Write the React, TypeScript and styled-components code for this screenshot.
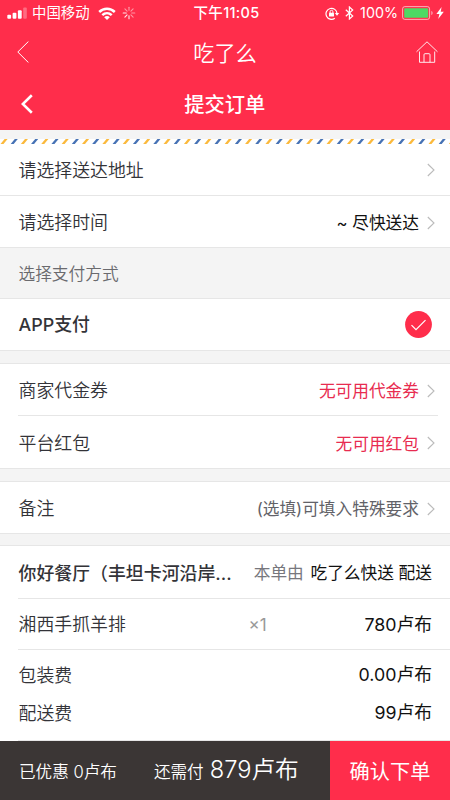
import React from 'react';
import styled, { createGlobalStyle } from 'styled-components';

const RED = '#ff2d4b';

const GlobalStyle = createGlobalStyle`
  * { box-sizing: border-box; }
  body { margin: 0; background: #f4f4f4; }
  svg { display: block; flex: none; }
`;

const Screen = styled.div`
  width: 450px;
  height: 800px;
  overflow: hidden;
  display: flex;
  flex-direction: column;
  background: #f4f4f4;
  color: #333338;
  font-family: Inter, "Noto Sans CJK SC", sans-serif;
  font-size: 17.9px;
  line-height: 26px;
  white-space: nowrap;
`;

const Triple = styled.div<{ $height: number; $left: number; $right: number }>`
  display: grid;
  grid-template-columns: 1fr auto 1fr;
  align-items: center;
  height: ${(p) => p.$height}px;
  padding: 0 ${(p) => p.$right}px 0 ${(p) => p.$left}px;
  background: ${RED};
  color: #fff;
`;

const Side = styled.div<{ $end?: boolean }>`
  display: flex;
  align-items: center;
  justify-content: ${(p) => (p.$end ? 'flex-end' : 'flex-start')};
`;

const Carrier = styled.span`
  margin: 0 8px 0 5px;
  font-size: 14.4px;
`;

const Clock = styled.span`
  margin-left: 2px;
  font-size: 14.5px;
  font-weight: 500;
  letter-spacing: 0.3px;
`;

const Percent = styled.span`
  margin: 0 4px 0 6px;
  font-size: 14.3px;
`;

const Title = styled.span<{ $size: number; $weight: number; $shift?: number }>`
  margin-right: ${(p) => p.$shift ?? 0}px;
  padding-top: 2px;
  font-size: ${(p) => p.$size}px;
  font-weight: ${(p) => p.$weight};
  line-height: 30px;
`;

const Envelope = styled.div`
  height: 15px;
  padding-top: 9px;
  background: linear-gradient(#f4f4f4 9px, #fff 9px);
`;

const Group = styled.section<{ $top?: boolean; $bottom?: boolean }>`
  background: #fff;
  border-top: ${(p) => (p.$top ? '1px solid #e6e6e6' : '0')};
  border-bottom: ${(p) => (p.$bottom ? '1px solid #e6e6e6' : '0')};
`;

const Row = styled.div<{ $height: number; $right?: number; $drop?: number }>`
  display: flex;
  align-items: center;
  justify-content: space-between;
  height: ${(p) => p.$height}px;
  padding: ${(p) => p.$drop ?? 2}px ${(p) => p.$right ?? 15}px 0 18.5px;
`;

const Divider = styled.div<{ $left?: number; $right?: number }>`
  height: 1px;
  margin: 0 ${(p) => p.$right ?? 0}px 0 ${(p) => p.$left ?? 0}px;
  background: #e6e6e6;
`;

const Gap = styled.div<{ $height: number }>`
  height: ${(p) => p.$height}px;
`;

const Caption = styled.div`
  height: 50px;
  padding: 13px 18.5px 0;
  font-size: 16.7px;
  font-weight: 350;
  color: #6a6a6e;
`;

const Label = styled.span<{ $weight?: number }>`
  padding-top: 1px;
  font-weight: ${(p) => p.$weight ?? 350};
`;

const Value = styled.span<{ $color?: string }>`
  display: flex;
  align-items: center;
  gap: 8px;
  font-size: 16.7px;
  color: ${(p) => p.$color ?? '#111'};
`;

const ValueText = styled.span`
  padding-top: 1px;
`;

const Courier = styled.span`
  font-size: 16.7px;
  color: #111;
`;

const Muted = styled.span`
  margin-right: 2px;
  color: #77777d;
`;

const ItemRow = styled.div`
  display: grid;
  grid-template-columns: 230px 1fr auto;
  align-items: center;
  height: 50px;
  padding: 1px 18px 0 18.5px;
`;

const Count = styled.span`
  font-size: 17px;
  color: #999;
`;

const Price = styled.span`
  font-size: 17.8px;
  color: #111;
`;

const Fees = styled.div`
  height: 90px;
  padding-top: 5px;
`;

const Footer = styled.footer`
  display: flex;
  height: 59px;
  background: #3b3635;
  color: #fff;
`;

const Totals = styled.div`
  flex: 1;
  display: flex;
  align-items: baseline;
  padding: 14px 0 0 19px;
  font-size: 16.6px;
  font-weight: 350;
  line-height: 30px;
`;

const Due = styled.span`
  margin-left: 37px;
`;

const Amount = styled.span`
  margin-left: 6px;
  font-size: 23.7px;
`;

const Submit = styled.button`
  width: 120px;
  padding: 2px 0 0;
  border: 0;
  background: ${RED};
  color: #fff;
  font: inherit;
  font-size: 20.2px;
`;

const Chevron = () => (
  <svg width="8" height="14" viewBox="0 0 8 14" fill="none" stroke="#bbb" strokeWidth="1.1">
    <path d="M0.8 1 7 7 0.8 13" />
  </svg>
);

const Signal = () => (
  <svg width="20" height="12" viewBox="0 0 20 12" fill="#fff">
    <rect x="0.3" y="7.7" width="3.8" height="4" rx="1" />
    <rect x="5.6" y="5.7" width="3.8" height="6" rx="1" />
    <rect x="10.9" y="3.2" width="3.8" height="8.5" rx="1" />
    <rect x="16.2" y="0.5" width="3.6" height="11.2" rx="1" opacity="0.3" />
  </svg>
);

const Wifi = () => (
  <svg width="18" height="13" viewBox="0 0 18 13" fill="none" stroke="#fff" strokeWidth="2.5">
    <path d="M1.2 5C5.6.7 12.4.7 16.8 5" />
    <path d="M4.3 8.2C7 5.7 11 5.7 13.7 8.2" />
    <path d="M6.2 10.2C7.8 8.7 10.2 8.7 11.8 10.2L9 13Z" fill="#fff" stroke="none" />
  </svg>
);

const Spinner = () => (
  <svg width="14" height="14" viewBox="0 0 14 14" stroke="#fff" strokeWidth="1.1" strokeLinecap="round">
    {[0, 1, 2, 3, 4, 5, 6, 7].map((i) => (
      <path
        key={i}
        d="M7 4.3V1.2"
        opacity={i >= 4 && i <= 6 ? 0.9 : 0.5}
        transform={`rotate(${i * 45} 7 7)`}
      />
    ))}
  </svg>
);

const RotationLock = () => (
  <svg width="15" height="13" viewBox="0 0 15 13" fill="none" stroke="#fff" strokeWidth="1.2">
    <path d="M9.8 11.2A5.5 5.5 0 1 1 12 6.5" />
    <path d="M9.8 6h4.4L12 8.8Z" fill="#fff" stroke="none" />
    <rect x="4" y="5.7" width="5" height="3.9" rx="0.5" fill="#fff" stroke="none" />
    <path d="M5.1 6V4.7a1.4 1.4 0 0 1 2.8 0V6" strokeWidth="1" />
  </svg>
);

const Bluetooth = () => (
  <svg width="9" height="14" viewBox="0 0 9 14" fill="none" stroke="#fff" strokeWidth="1.2">
    <path d="M.8 3.8 7.7 10 4.4 13V1L7.7 4 .8 10.2" />
  </svg>
);

const Battery = () => (
  <svg width="31" height="14" viewBox="0 0 31 14">
    <rect x="0.6" y="0.6" width="27" height="12.8" rx="2.2" fill="none" stroke="#fff" strokeOpacity="0.6" />
    <rect x="2.2" y="2.2" width="24" height="9.6" rx="0.8" fill="#4cd964" />
    <path d="M29.3 5v4c1.8-.8 1.8-3.2 0-4Z" fill="#fff" opacity="0.6" />
  </svg>
);

const Bolt = () => (
  <svg width="8" height="12" viewBox="0 0 8 12" fill="#fff">
    <path d="M5.6 0 .4 6.9h3L2.2 12 7.8 4.7H4.7Z" />
  </svg>
);

const BackThin = () => (
  <svg width="12" height="22" viewBox="0 0 12 22" fill="none" stroke="#fff" strokeWidth="1">
    <path d="M11.4.5.8 11l10.6 10.5" />
  </svg>
);

const Home = () => (
  <svg width="22" height="22" viewBox="0 0 22 22" fill="none" stroke="#fff" strokeWidth="0.9">
    <path d="M.5 10.8 11 .8l10.5 10M3.5 10.5v10.8h15.2V10.5M8 21.3v-7.6q0-1 1-1h4q1 0 1 1v7.6" />
  </svg>
);

const BackBold = () => (
  <svg width="12" height="20" viewBox="0 0 12 20" fill="none" stroke="#fff" strokeWidth="2.6">
    <path d="M10.8 1.2 1.8 10l9 8.8" />
  </svg>
);

const Check = () => (
  <svg width="27" height="27" viewBox="0 0 27 27" fill="none">
    <circle cx="13.5" cy="13.5" r="13.4" fill={RED} />
    <path d="M6.5 14.2 11 18.7 20.5 9.2" stroke="#fff" strokeWidth="1.2" />
  </svg>
);

const Stripes = () => (
  <svg width="450" height="5" viewBox="0 0 450 5">
    {Array.from({ length: 45 }, (_, i) => (
      <path
        key={i}
        d="M.5 5 4.6 0h3L3.5 5Z"
        fill={i % 2 ? '#4672b5' : '#fbb93c'}
        transform={`translate(${i * 10.19} 0)`}
      />
    ))}
  </svg>
);

const Spacer = styled.div<{ $w: number }>`
  width: ${(p) => p.$w}px;
`;

export default function App() {
  return (
    <Screen>
      <GlobalStyle />
      <Triple $height={25} $left={7} $right={6}>
        <Side>
          <Signal />
          <Carrier>中国移动</Carrier>
          <Wifi />
          <Spacer $w={6} />
          <Spinner />
        </Side>
        <Clock>下午11:05</Clock>
        <Side $end>
          <RotationLock />
          <Spacer $w={5} />
          <Bluetooth />
          <Percent>100%</Percent>
          <Battery />
          <Spacer $w={3} />
          <Bolt />
        </Side>
      </Triple>
      <Triple $height={53} $left={17} $right={12}>
        <Side><BackThin /></Side>
        <Title $size={21.2} $weight={350} $shift={5}>吃了么</Title>
        <Side $end><Home /></Side>
      </Triple>
      <Triple $height={52} $left={20.5} $right={21}>
        <Side><BackBold /></Side>
        <Title $size={20.3} $weight={500}>提交订单</Title>
        <Side $end />
      </Triple>
      <Envelope><Stripes /></Envelope>
      <Group $bottom>
        <Row $height={50} $drop={0}><Label>请选择送达地址</Label><Chevron /></Row>
        <Divider />
        <Row $height={51}><Label>请选择时间</Label><Value><ValueText>~ 尽快送达</ValueText><Chevron /></Value></Row>
      </Group>
      <Caption>选择支付方式</Caption>
      <Group $top $bottom>
        <Row $height={51} $right={18} $drop={0}><Label $weight={450}>APP支付</Label><Check /></Row>
      </Group>
      <Gap $height={12} />
      <Group $top $bottom>
        <Row $height={51}><Label>商家代金券</Label><Value $color="#e82c50"><ValueText>无可用代金券</ValueText><Chevron /></Value></Row>
        <Divider $left={18} $right={12} />
        <Row $height={52}><Label>平台红包</Label><Value $color="#e82c50"><ValueText>无可用红包</ValueText><Chevron /></Value></Row>
      </Group>
      <Gap $height={12} />
      <Group $top $bottom>
        <Row $height={51}><Label>备注</Label><Value $color="#626268"><ValueText>(选填)可填入特殊要求</ValueText><Chevron /></Value></Row>
      </Group>
      <Gap $height={11} />
      <Group $top>
        <Row $height={52} $right={18}>
          <Label $weight={500}>你好餐厅（丰坦卡河沿岸...</Label>
          <Courier><Muted>本单由</Muted> 吃了么快送 配送</Courier>
        </Row>
        <Divider $left={18} />
        <ItemRow><Label>湘西手抓羊排</Label><Count>×1</Count><Price>780卢布</Price></ItemRow>
        <Divider $left={18} />
        <Fees>
          <Row $height={38} $right={18}><Label>包装费</Label><Price>0.00卢布</Price></Row>
          <Row $height={38} $right={18}><Label>配送费</Label><Price>99卢布</Price></Row>
        </Fees>
        <Divider $left={18} />
      </Group>
      <Footer>
        <Totals>
          <span>已优惠 0卢布</span>
          <Due>还需付<Amount>879卢布</Amount></Due>
        </Totals>
        <Submit>确认下单</Submit>
      </Footer>
    </Screen>
  );
}
